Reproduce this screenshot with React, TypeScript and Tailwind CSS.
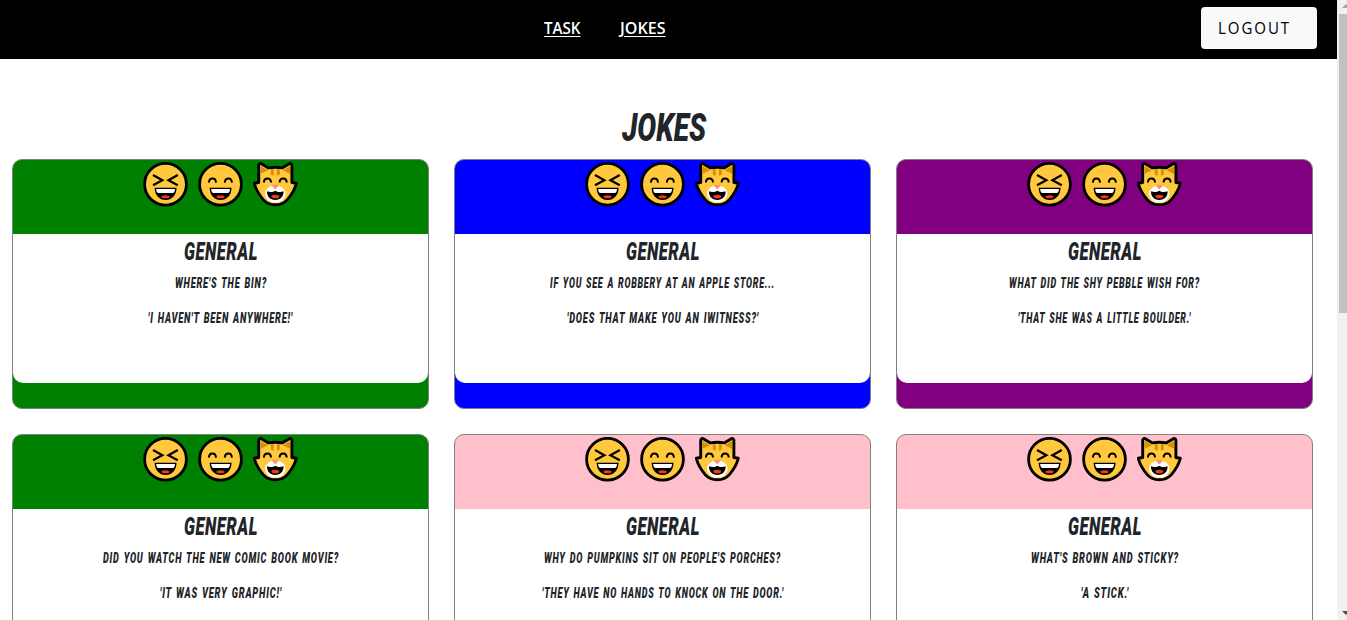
import { useLayoutEffect, useRef } from "react";

type FitProps = { text: string; width: number; className?: string };

/* Condenses a single line of text so that it spans exactly `width` pixels. */
function Fit({ text, width, className = "" }: FitProps) {
  const ref = useRef<HTMLSpanElement>(null);
  useLayoutEffect(() => {
    const el = ref.current;
    if (el && el.offsetWidth) {
      el.style.transform = `scaleX(${width / el.getBoundingClientRect().width})`;
    }
    return () => {
      if (el) el.style.transform = "";
    };
  }, [text, width]);
  return (
    <span className="block whitespace-nowrap" style={{ width }}>
      <span ref={ref} className={`inline-block origin-left ${className}`}>
        {text}
      </span>
    </span>
  );
}

function Mouth() {
  return (
    <g>
      <path d="M11.6 25.8H33.6C33.2 33.5 29 38 22.6 38S12 33.5 11.6 25.8Z" fill="#000" />
      <path d="M13.2 27H32C31.9 29.6 31 31 29.8 31H15.4C14.2 31 13.3 29.6 13.2 27Z" fill="#fff" />
      <ellipse cx="22.5" cy="34.8" rx="4" ry="1.5" fill="#f03a17" />
    </g>
  );
}

function Face({ squint }: { squint: boolean }) {
  return (
    <svg className="size-[45px]" viewBox="0 0 45 45" fill="none" aria-hidden="true">
      <circle cx="22.5" cy="22.2" r="20.9" fill="#ffc83d" stroke="#000" strokeWidth="2.8" />
      {squint ? (
        <path d="M10 13L19.4 18.2L10 23.3M34.8 13L25.4 18.2L34.8 23.3" stroke="#000" strokeWidth="2.2" />
      ) : (
        <path
          d="M10.9 20.6C11.1 15 17.8 15 18 20.6M26.8 20.6C27 15 33.7 15 33.9 20.6"
          stroke="#000"
          strokeWidth="2"
        />
      )}
      <Mouth />
    </svg>
  );
}

function Cat() {
  return (
    <svg className="size-[45px]" viewBox="0 0 45 45" fill="none" aria-hidden="true">
      <path
        d="M8.3 1.7L15.5 5.9Q22.3 4.7 29.1 5.9L36.3 1.7Q38.9 1 38.9 3.6V20.5L43.3 21.2C41.8 27.8 38.2 33 34.4 37.6C31.4 41 27.5 42.8 22.3 42.8S13.2 41 10.2 37.6C6.4 33 2.8 27.8 1.3 21.2L5.7 20.5V3.6Q5.7 1 8.3 1.7Z"
        fill="#ffc83d"
        stroke="#000"
        strokeWidth="2.9"
        strokeLinejoin="round"
      />
      <path d="M7.6 4.2L15 8.2L7.6 11.8ZM37 4.2L29.6 8.2L37 11.8Z" fill="#d98f00" />
      <path d="M17.8 7.3H20.7V13.8L17.8 12.5ZM23.9 7.3H26.8V12.5L23.9 13.8Z" fill="#d98f00" />
      <ellipse cx="22.3" cy="32" rx="10.2" ry="8.8" fill="#fff" />
      <path
        d="M10.9 20.5C11.1 15 17.8 15 18 20.5M26.6 20.5C26.8 15 33.5 15 33.7 20.5"
        stroke="#000"
        strokeWidth="2"
      />
      <path d="M19 22.7H25.6Q26.3 23.6 22.3 27.4Q18.3 23.6 19 22.7Z" fill="#ff9368" />
      <path d="M14 29.3C16.6 30.6 20.3 30.3 22.3 28.8C24.3 30.3 28 30.6 30.6 29.3C30.8 34.6 27.6 38 22.3 38S13.8 34.6 14 29.3Z" fill="#000" />
      <ellipse cx="22.3" cy="34.6" rx="4" ry="1.8" fill="#f03a17" />
    </svg>
  );
}

type Joke = { bg: string; q: string; qw: number; a: string; aw: number };

const jokes: Joke[] = [
  { bg: "bg-[#008000]", q: "WHERE'S THE BIN?", qw: 92, a: "'I HAVEN'T BEEN ANYWHERE!'", aw: 145 },
  { bg: "bg-[#0000ff]", q: "IF YOU SEE A ROBBERY AT AN APPLE STORE...", qw: 225, a: "'DOES THAT MAKE YOU AN IWITNESS?'", aw: 192 },
  { bg: "bg-[#800080]", q: "WHAT DID THE SHY PEBBLE WISH FOR?", qw: 191, a: "'THAT SHE WAS A LITTLE BOULDER.'", aw: 173 },
  { bg: "bg-[#008000]", q: "DID YOU WATCH THE NEW COMIC BOOK MOVIE?", qw: 236, a: "'IT WAS VERY GRAPHIC!'", aw: 122 },
  { bg: "bg-[#ffc0cb]", q: "WHY DO PUMPKINS SIT ON PEOPLE'S PORCHES?", qw: 237, a: "'THEY HAVE NO HANDS TO KNOCK ON THE DOOR.'", aw: 242 },
  { bg: "bg-[#ffc0cb]", q: "WHAT'S BROWN AND STICKY?", qw: 148, a: "'A STICK.'", aw: 48 },
];

function Card({ joke }: { joke: Joke }) {
  return (
    <article className={`h-[250px] overflow-hidden rounded-[10px] border border-[#808080] ${joke.bg}`}>
      <div className="flex h-[74px] items-start justify-center gap-2.5 pt-0.5">
        <Face squint />
        <Face squint={false} />
        <Cat />
      </div>
      <div className="flex h-[149px] flex-col items-center rounded-b-[10px] bg-white pt-[3px]">
        <h2 className="h-[29px] text-[25px] leading-[29px]">
          <Fit text="GENERAL" width={74} className="font-black tracking-[0.8px] italic" />
        </h2>
        <p className="mt-[7px] h-5 text-[14px] leading-[21px]">
          <Fit text={joke.q} width={joke.qw} className="font-black tracking-[1.2px] [word-spacing:1.5px] italic" />
        </p>
        <p className="mt-[15px] h-5 text-[14px] leading-[21px]">
          <Fit text={joke.a} width={joke.aw} className="font-black tracking-[1.2px] [word-spacing:1.5px] italic" />
        </p>
      </div>
    </article>
  );
}

export default function App() {
  return (
    <div className="flex h-[620px] w-[1347px] overflow-hidden bg-white font-['Roboto',sans-serif] text-[#212529]">
      <div className="w-[1337px] shrink-0">
        <header className="flex h-[59px] items-center bg-black pr-5 pl-[544px] font-['Open_Sans',sans-serif]">
          <nav className="-mt-1 flex w-[657px] shrink-0 gap-[39.5px] text-[15.5px] leading-6 font-semibold text-white">
            <a href="#task"><Fit text="TASK" width={36.5} className="underline underline-offset-2" /></a>
            <a href="#jokes"><Fit text="JOKES" width={45.5} className="underline underline-offset-2" /></a>
          </nav>
          <button className="-mt-[3px] h-[42px] w-[116px] shrink-0 rounded bg-[#f9f9f9] pl-[17px] text-left text-[15.5px] leading-6 font-medium text-black">
            <Fit text="LOGOUT" width={73} className="tracking-[2px]" />
          </button>
        </header>
        <main className="px-3 pt-[42px]">
          <h1 className="flex h-[58px] justify-center pt-[3px] pr-[9px] text-[39.5px] leading-[47px]">
            <Fit text="JOKES" width={84} className="font-black italic" />
          </h1>
          <section className="grid grid-cols-[417px_417px_417px] gap-[25px]">
            {jokes.map((joke) => (
              <Card key={joke.q} joke={joke} />
            ))}
          </section>
        </main>
      </div>
      <div className="flex h-full w-2.5 shrink-0 flex-col justify-between overflow-hidden bg-[#f1f1f1] pl-0.5">
        <div>
          <svg className="ml-[3px] h-3.5 w-2" viewBox="0 0 8 14" aria-hidden="true">
            <path d="M0 8L4 4L8 8Z" fill="#a3a3a3" />
          </svg>
          <div className="h-[299px] bg-[#c1c1c1]" />
        </div>
        <svg className="ml-[3px] h-3.5 w-2" viewBox="0 0 8 14" aria-hidden="true">
          <path d="M0 5L4 9L8 5Z" fill="#505050" />
        </svg>
      </div>
    </div>
  );
}
